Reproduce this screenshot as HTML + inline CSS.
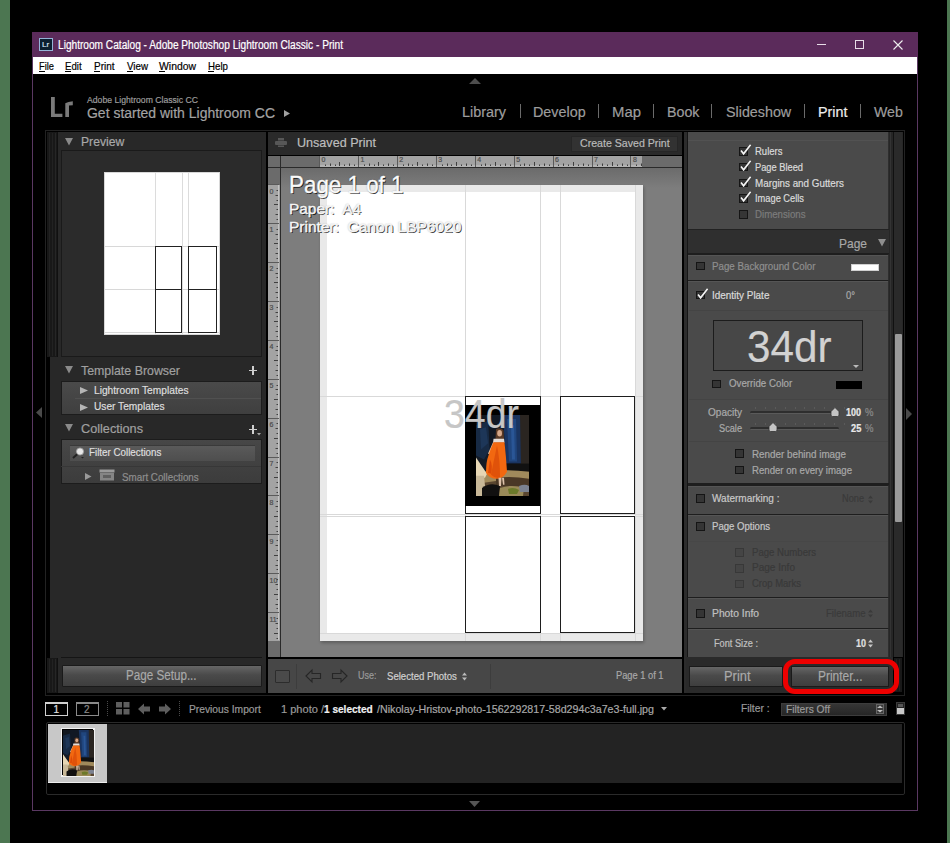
<!DOCTYPE html>
<html><head><meta charset="utf-8">
<style>
*{margin:0;padding:0;box-sizing:border-box}
html,body{width:950px;height:843px;overflow:hidden;background:#000;font-family:"Liberation Sans",sans-serif;position:relative}
.a{position:absolute}
.t{position:absolute;white-space:nowrap;line-height:1;-webkit-text-stroke:0.2px currentColor}
svg{position:absolute;overflow:visible}
</style></head><body>
<div class="a" style="left:0px;top:0px;width:10px;height:843px;background:#4c7651"></div>
<div class="a" style="left:947px;top:0px;width:3px;height:843px;background:#4c7651"></div>
<div class="a" style="left:32px;top:32px;width:886px;height:779px;background:#000;border:1px solid #5a3862;border-top:none"></div>
<div class="a" style="left:32px;top:32px;width:886px;height:25px;background:#5b2b5b"></div>
<div class="a" style="left:39px;top:38px;width:14px;height:13px;background:#0c1f30;border:1px solid #94b4d8"></div>
<div class="t" id="t1" style="left:42px;top:41.00px;font-size:8px;color:#cfe0f0;font-weight:normal;">Lr</div>
<div class="t" id="t2" style="transform:scaleX(0.8444);transform-origin:0 0;left:57.6px;top:39.00px;font-size:12px;color:#ffffff;font-weight:normal;">Lightroom Catalog - Adobe Photoshop Lightroom Classic - Print</div>
<div class="a" style="left:817px;top:44px;width:9px;height:1px;background:#e8dde8"></div>
<div class="a" style="left:855px;top:40px;width:9px;height:9px;border:1px solid #e8dde8"></div>
<svg style="left:893px;top:40px" width="10" height="10"><path d="M0.5 0.5L9.5 9.5M9.5 0.5L0.5 9.5" stroke="#eee" stroke-width="1.1"/></svg>
<div class="a" style="left:33px;top:57px;width:884px;height:17px;background:#fff"></div>
<div class="t" id="t3" style="transform:scaleX(0.8458);transform-origin:0 0;left:38.8px;top:61.00px;font-size:11px;color:#000;font-weight:normal;">File</div>
<div class="a" style="left:39px;top:71px;width:6px;height:1px;background:#000"></div>
<div class="t" id="t4" style="transform:scaleX(0.8751);transform-origin:0 0;left:65.4px;top:61.00px;font-size:11px;color:#000;font-weight:normal;">Edit</div>
<div class="a" style="left:65px;top:71px;width:6px;height:1px;background:#000"></div>
<div class="t" id="t5" style="transform:scaleX(0.9061);transform-origin:0 0;left:94.2px;top:61.00px;font-size:11px;color:#000;font-weight:normal;">Print</div>
<div class="a" style="left:94px;top:71px;width:6px;height:1px;background:#000"></div>
<div class="t" id="t6" style="transform:scaleX(0.8877);transform-origin:0 0;left:126.7px;top:61.00px;font-size:11px;color:#000;font-weight:normal;">View</div>
<div class="a" style="left:127px;top:71px;width:6px;height:1px;background:#000"></div>
<div class="t" id="t7" style="transform:scaleX(0.9457);transform-origin:0 0;left:159.4px;top:61.00px;font-size:11px;color:#000;font-weight:normal;">Window</div>
<div class="a" style="left:159px;top:71px;width:6px;height:1px;background:#000"></div>
<div class="t" id="t8" style="transform:scaleX(0.8840);transform-origin:0 0;left:208px;top:61.00px;font-size:11px;color:#000;font-weight:normal;">Help</div>
<div class="a" style="left:208px;top:71px;width:6px;height:1px;background:#000"></div>
<svg style="left:469px;top:78px" width="12" height="6"><path d="M0 6L6 0L12 6Z" fill="#4d4d4d"/></svg>
<svg style="left:50px;top:96px" width="25" height="22"><path d="M1 1H4.8V17.8H12.4V21H1Z" fill="#7a7a7a"/><path d="M15.3 7.2Q18 5.6 22.8 5.2V9.2Q20.5 9.2 19 9.6V21H15.3Z" fill="#7a7a7a"/></svg>
<div class="t" id="t9" style="transform:scaleX(0.9409);transform-origin:0 0;left:87px;top:96.00px;font-size:9.2px;color:#9c9c9c;font-weight:normal;">Adobe Lightroom Classic CC</div>
<div class="t" id="t10" style="transform:scaleX(0.9017);transform-origin:0 0;left:87px;top:105.00px;font-size:15.5px;color:#a3a3a3;font-weight:normal;">Get started with Lightroom CC</div>
<svg style="left:284px;top:110px" width="6" height="7"><path d="M0 0L6 3.5L0 7Z" fill="#a0a0a0"/></svg>
<div class="t" id="t11" style="transform:scaleX(0.9352);transform-origin:0 0;left:461.8px;top:104.00px;font-size:15.4px;color:#9d9d9d;font-weight:normal;">Library</div>
<div class="t" id="t12" style="transform:scaleX(0.9315);transform-origin:0 0;left:532.9px;top:104.00px;font-size:15.4px;color:#9d9d9d;font-weight:normal;">Develop</div>
<div class="t" id="t13" style="transform:scaleX(0.9682);transform-origin:0 0;left:611.8px;top:104.00px;font-size:15.4px;color:#9d9d9d;font-weight:normal;">Map</div>
<div class="t" id="t14" style="transform:scaleX(0.9261);transform-origin:0 0;left:667px;top:104.00px;font-size:15.4px;color:#9d9d9d;font-weight:normal;">Book</div>
<div class="t" id="t15" style="transform:scaleX(0.9294);transform-origin:0 0;left:725.8px;top:104.00px;font-size:15.4px;color:#9d9d9d;font-weight:normal;">Slideshow</div>
<div class="t" id="t16" style="transform:scaleX(0.9319);transform-origin:0 0;left:817.9px;top:104.00px;font-size:15.4px;color:#ececec;font-weight:normal;">Print</div>
<div class="t" id="t17" style="transform:scaleX(0.9211);transform-origin:0 0;left:873.7px;top:104.00px;font-size:15.4px;color:#9d9d9d;font-weight:normal;">Web</div>
<div class="a" style="left:520px;top:104px;width:1px;height:14px;background:#6a6a6a"></div>
<div class="a" style="left:598px;top:104px;width:1px;height:14px;background:#6a6a6a"></div>
<div class="a" style="left:653px;top:104px;width:1px;height:14px;background:#6a6a6a"></div>
<div class="a" style="left:711px;top:104px;width:1px;height:14px;background:#6a6a6a"></div>
<div class="a" style="left:804px;top:104px;width:1px;height:14px;background:#6a6a6a"></div>
<div class="a" style="left:860px;top:104px;width:1px;height:14px;background:#6a6a6a"></div>
<div class="a" style="left:45px;top:130px;width:860px;height:566px;background:#000;border:1px solid #222"></div>
<div class="a" style="left:49.5px;top:132px;width:216.5px;height:561px;background:#282828"></div>
<div class="a" style="left:47px;top:132px;width:10px;height:225px;background:#181818"></div>
<div class="a" style="left:49px;top:133px;width:1px;height:223px;background:#222"></div>
<div class="a" style="left:52px;top:133px;width:1px;height:223px;background:#222"></div>
<div class="a" style="left:55px;top:133px;width:1px;height:223px;background:#262626"></div>
<div class="a" style="left:57px;top:132px;width:1px;height:225px;background:#101010"></div>
<div class="a" style="left:47px;top:658px;width:10px;height:35px;background:#181818"></div>
<div class="a" style="left:49px;top:659px;width:1px;height:33px;background:#222"></div>
<div class="a" style="left:52px;top:659px;width:1px;height:33px;background:#222"></div>
<div class="a" style="left:55px;top:659px;width:1px;height:33px;background:#262626"></div>
<div class="a" style="left:57px;top:658px;width:1px;height:35px;background:#101010"></div>
<svg style="left:64.5px;top:137.6px" width="8" height="8"><path d="M0 0H8L4 7.6Z" fill="#8a8a8a"/></svg>
<div class="t" id="t18" style="transform:scaleX(0.9231);transform-origin:0 0;left:80.7px;top:135.00px;font-size:13.2px;color:#a8a8a8;font-weight:normal;">Preview</div>
<div class="a" style="left:61px;top:150px;width:201px;height:207px;background:#2b2b2b;border:1px solid #1a1a1a"></div>
<div class="a" style="left:104px;top:172px;width:116px;height:163px;background:#fff;border:1px solid #d8d8d8"></div>
<div class="a" style="left:155px;top:173px;width:1px;height:161px;background:#dcdcdc"></div>
<div class="a" style="left:182px;top:173px;width:1px;height:161px;background:#dcdcdc"></div>
<div class="a" style="left:188px;top:173px;width:1px;height:161px;background:#dcdcdc"></div>
<div class="a" style="left:105px;top:246px;width:114px;height:1px;background:#d8d8d8"></div>
<div class="a" style="left:105px;top:289px;width:114px;height:1px;background:#d8d8d8"></div>
<div class="a" style="left:105px;top:332px;width:114px;height:1px;background:#d8d8d8"></div>
<div class="a" style="left:155px;top:246px;width:27px;height:44px;border:1px solid #222"></div>
<div class="a" style="left:155px;top:289px;width:27px;height:44px;border:1px solid #222"></div>
<div class="a" style="left:188px;top:246px;width:29px;height:44px;border:1px solid #222"></div>
<div class="a" style="left:188px;top:289px;width:29px;height:44px;border:1px solid #222"></div>
<svg style="left:64.5px;top:366px" width="8" height="8"><path d="M0 0H8L4 7.6Z" fill="#8a8a8a"/></svg>
<div class="t" id="t19" style="transform:scaleX(0.9380);transform-origin:0 0;left:81px;top:364.00px;font-size:13.2px;color:#a0a0a0;font-weight:normal;">Template Browser</div>
<div class="a" style="left:248.5px;top:369.5px;width:8.5px;height:1.6px;background:#cfcfcf"></div>
<div class="a" style="left:252px;top:366px;width:1.6px;height:8.5px;background:#cfcfcf"></div>
<div class="a" style="left:60.5px;top:380.5px;width:201px;height:34px;background:linear-gradient(#4a4a4a,#3f3f3f);border:1px solid #1c1c1c"></div>
<div class="a" style="left:75px;top:398px;width:186px;height:1px;background:#505050"></div>
<svg style="left:80px;top:386.5px" width="8" height="7"><path d="M0 0L8 3.5L0 7Z" fill="#b5b5b5"/></svg>
<svg style="left:80px;top:403.5px" width="8" height="7"><path d="M0 0L8 3.5L0 7Z" fill="#b5b5b5"/></svg>
<div class="t" id="t20" style="transform:scaleX(1.0199);transform-origin:0 0;left:94px;top:386.00px;font-size:10px;color:#dddddd;font-weight:normal;">Lightroom Templates</div>
<div class="t" id="t21" style="transform:scaleX(1.0174);transform-origin:0 0;left:94px;top:402.00px;font-size:10px;color:#dddddd;font-weight:normal;">User Templates</div>
<svg style="left:64.5px;top:424px" width="8" height="8"><path d="M0 0H8L4 7.6Z" fill="#8a8a8a"/></svg>
<div class="t" id="t22" style="transform:scaleX(0.9610);transform-origin:0 0;left:81px;top:422.00px;font-size:13.2px;color:#a0a0a0;font-weight:normal;">Collections</div>
<div class="a" style="left:248.5px;top:428.5px;width:8.5px;height:1.6px;background:#cfcfcf"></div>
<div class="a" style="left:252px;top:425px;width:1.6px;height:8.5px;background:#cfcfcf"></div>
<svg style="left:257px;top:433px" width="4" height="3"><path d="M0 0H4L2 2.5Z" fill="#aaa"/></svg>
<div class="a" style="left:60.5px;top:439px;width:201px;height:45px;background:linear-gradient(#474747,#3c3c3c);border:1px solid #1c1c1c"></div>
<div class="a" style="left:69.5px;top:444.5px;width:185px;height:16.5px;background:linear-gradient(#5a5a5a,#4e4e4e);border-top:1px solid #3a3a3a"></div>
<svg style="left:72px;top:447px" width="14" height="12"><circle cx="8" cy="4.5" r="3.6" fill="#e8e8e8" stroke="#999" stroke-width="0.8"/><path d="M5.2 7.2L1 11" stroke="#222" stroke-width="2"/><path d="M9 10H12L10.5 11.5Z" fill="#222"/></svg>
<div class="t" id="t23" style="transform:scaleX(0.9794);transform-origin:0 0;left:89px;top:448.00px;font-size:10px;color:#dedede;font-weight:normal;">Filter Collections</div>
<div class="a" style="left:61px;top:466px;width:200px;height:1px;background:#373737"></div>
<svg style="left:85px;top:473px" width="7" height="7"><path d="M0 0L6.5 3.5L0 7Z" fill="#9a9a9a"/></svg>
<svg style="left:99px;top:469px" width="16" height="12"><rect x="0.5" y="0.5" width="15" height="3" fill="#9a9a9a"/><rect x="1" y="4" width="14" height="7.5" fill="#858585"/><rect x="4" y="6" width="8" height="3" fill="#606060"/></svg>
<div class="t" id="t24" style="transform:scaleX(0.9788);transform-origin:0 0;left:122.4px;top:473.00px;font-size:10px;color:#8e8e8e;font-weight:normal;">Smart Collections</div>
<div class="a" style="left:61px;top:657px;width:201px;height:1px;background:#151515"></div>
<div class="a" style="left:61.5px;top:665px;width:200px;height:22px;background:linear-gradient(#666,#4a4a4a 45%,#3e3e3e);border:1px solid #1a1a1a;border-radius:1px"></div>
<div class="t" id="t25" style="transform:scaleX(0.8321);transform-origin:0 0;left:126.4px;top:668.00px;font-size:14px;color:#a9a9a9;font-weight:normal;">Page Setup...</div>
<svg style="left:36px;top:407px" width="6" height="11"><path d="M6 0L0 5.5L6 11Z" fill="#4a4a4a"/></svg>
<div class="a" style="left:268px;top:131.5px;width:414px;height:23.5px;background:#2a2a2a"></div>
<svg style="left:275px;top:138px" width="12" height="9"><rect x="3" y="0" width="6" height="2.5" fill="#575757"/><rect x="0" y="3" width="12" height="4" rx="1" fill="#575757"/><rect x="3" y="7.5" width="6" height="1.5" fill="#575757"/></svg>
<div class="t" id="t26" style="transform:scaleX(0.9986);transform-origin:0 0;left:296.7px;top:137.00px;font-size:12.6px;color:#bdbdbd;font-weight:normal;">Unsaved Print</div>
<div class="a" style="left:571px;top:135.5px;width:107px;height:16px;background:#323232;border:1px solid #262626"></div>
<div class="t" id="t27" style="transform:scaleX(0.9641);transform-origin:0 0;left:579.8px;top:138.00px;font-size:11px;color:#b9b9b9;font-weight:normal;">Create Saved Print</div>
<div class="a" style="left:268px;top:155.5px;width:414px;height:11.5px;background:#6b6b6b"></div>
<div class="a" style="left:268px;top:155.5px;width:11.5px;height:502px;background:#6b6b6b"></div>
<div class="a" style="left:279.5px;top:155.5px;width:1.5px;height:502px;background:#2a2a2a"></div>
<div class="a" style="left:268px;top:167px;width:414px;height:1px;background:#2a2a2a"></div>
<div class="a" style="left:320px;top:155.5px;width:322px;height:11.5px;background:#a3a3a3"></div>
<div class="a" style="left:268px;top:185px;width:11.5px;height:455.5px;background:#a3a3a3"></div>
<svg style="left:0px;top:0px" width="950" height="843"><rect x="320" y="165.5" width="322" height="1" fill="#c4c4c4"/><rect x="278" y="185" width="1" height="455" fill="#c4c4c4"/><rect x="319" y="156" width="1" height="11" fill="#5a5a5a"/><rect x="325" y="164.5" width="1" height="1.5" fill="#404040"/><rect x="330" y="163.5" width="1" height="2.5" fill="#404040"/><rect x="335" y="164.5" width="1" height="1.5" fill="#404040"/><rect x="339" y="162" width="1" height="4" fill="#404040"/><rect x="344" y="164.5" width="1" height="1.5" fill="#404040"/><rect x="349" y="163.5" width="1" height="2.5" fill="#404040"/><rect x="354" y="164.5" width="1" height="1.5" fill="#404040"/><rect x="358" y="156" width="1" height="11" fill="#5a5a5a"/><rect x="364" y="164.5" width="1" height="1.5" fill="#404040"/><rect x="369" y="163.5" width="1" height="2.5" fill="#404040"/><rect x="374" y="164.5" width="1" height="1.5" fill="#404040"/><rect x="378" y="162" width="1" height="4" fill="#404040"/><rect x="383" y="164.5" width="1" height="1.5" fill="#404040"/><rect x="388" y="163.5" width="1" height="2.5" fill="#404040"/><rect x="393" y="164.5" width="1" height="1.5" fill="#404040"/><rect x="397" y="156" width="1" height="11" fill="#5a5a5a"/><rect x="403" y="164.5" width="1" height="1.5" fill="#404040"/><rect x="408" y="163.5" width="1" height="2.5" fill="#404040"/><rect x="412" y="164.5" width="1" height="1.5" fill="#404040"/><rect x="417" y="162" width="1" height="4" fill="#404040"/><rect x="422" y="164.5" width="1" height="1.5" fill="#404040"/><rect x="427" y="163.5" width="1" height="2.5" fill="#404040"/><rect x="432" y="164.5" width="1" height="1.5" fill="#404040"/><rect x="436" y="156" width="1" height="11" fill="#5a5a5a"/><rect x="442" y="164.5" width="1" height="1.5" fill="#404040"/><rect x="447" y="163.5" width="1" height="2.5" fill="#404040"/><rect x="451" y="164.5" width="1" height="1.5" fill="#404040"/><rect x="456" y="162" width="1" height="4" fill="#404040"/><rect x="461" y="164.5" width="1" height="1.5" fill="#404040"/><rect x="466" y="163.5" width="1" height="2.5" fill="#404040"/><rect x="471" y="164.5" width="1" height="1.5" fill="#404040"/><rect x="475" y="156" width="1" height="11" fill="#5a5a5a"/><rect x="481" y="164.5" width="1" height="1.5" fill="#404040"/><rect x="485" y="163.5" width="1" height="2.5" fill="#404040"/><rect x="490" y="164.5" width="1" height="1.5" fill="#404040"/><rect x="495" y="162" width="1" height="4" fill="#404040"/><rect x="500" y="164.5" width="1" height="1.5" fill="#404040"/><rect x="505" y="163.5" width="1" height="2.5" fill="#404040"/><rect x="510" y="164.5" width="1" height="1.5" fill="#404040"/><rect x="514" y="156" width="1" height="11" fill="#5a5a5a"/><rect x="520" y="164.5" width="1" height="1.5" fill="#404040"/><rect x="524" y="163.5" width="1" height="2.5" fill="#404040"/><rect x="529" y="164.5" width="1" height="1.5" fill="#404040"/><rect x="534" y="162" width="1" height="4" fill="#404040"/><rect x="539" y="164.5" width="1" height="1.5" fill="#404040"/><rect x="544" y="163.5" width="1" height="2.5" fill="#404040"/><rect x="549" y="164.5" width="1" height="1.5" fill="#404040"/><rect x="553" y="156" width="1" height="11" fill="#5a5a5a"/><rect x="558" y="164.5" width="1" height="1.5" fill="#404040"/><rect x="563" y="163.5" width="1" height="2.5" fill="#404040"/><rect x="568" y="164.5" width="1" height="1.5" fill="#404040"/><rect x="573" y="162" width="1" height="4" fill="#404040"/><rect x="578" y="164.5" width="1" height="1.5" fill="#404040"/><rect x="583" y="163.5" width="1" height="2.5" fill="#404040"/><rect x="588" y="164.5" width="1" height="1.5" fill="#404040"/><rect x="592" y="156" width="1" height="11" fill="#5a5a5a"/><rect x="597" y="164.5" width="1" height="1.5" fill="#404040"/><rect x="602" y="163.5" width="1" height="2.5" fill="#404040"/><rect x="607" y="164.5" width="1" height="1.5" fill="#404040"/><rect x="612" y="162" width="1" height="4" fill="#404040"/><rect x="617" y="164.5" width="1" height="1.5" fill="#404040"/><rect x="622" y="163.5" width="1" height="2.5" fill="#404040"/><rect x="627" y="164.5" width="1" height="1.5" fill="#404040"/><rect x="630" y="156" width="1" height="11" fill="#5a5a5a"/><rect x="636" y="164.5" width="1" height="1.5" fill="#404040"/><rect x="641" y="163.5" width="1" height="2.5" fill="#404040"/><rect x="268" y="184" width="11" height="1" fill="#5a5a5a"/><rect x="276.5" y="190" width="1.5" height="1" fill="#404040"/><rect x="275.5" y="195" width="2.5" height="1" fill="#404040"/><rect x="276.5" y="200" width="1.5" height="1" fill="#404040"/><rect x="274" y="204" width="4" height="1" fill="#404040"/><rect x="276.5" y="209" width="1.5" height="1" fill="#404040"/><rect x="275.5" y="214" width="2.5" height="1" fill="#404040"/><rect x="276.5" y="219" width="1.5" height="1" fill="#404040"/><rect x="268" y="223" width="11" height="1" fill="#5a5a5a"/><rect x="276.5" y="229" width="1.5" height="1" fill="#404040"/><rect x="275.5" y="234" width="2.5" height="1" fill="#404040"/><rect x="276.5" y="239" width="1.5" height="1" fill="#404040"/><rect x="274" y="243" width="4" height="1" fill="#404040"/><rect x="276.5" y="248" width="1.5" height="1" fill="#404040"/><rect x="275.5" y="253" width="2.5" height="1" fill="#404040"/><rect x="276.5" y="258" width="1.5" height="1" fill="#404040"/><rect x="268" y="262" width="11" height="1" fill="#5a5a5a"/><rect x="276.5" y="268" width="1.5" height="1" fill="#404040"/><rect x="275.5" y="273" width="2.5" height="1" fill="#404040"/><rect x="276.5" y="277" width="1.5" height="1" fill="#404040"/><rect x="274" y="282" width="4" height="1" fill="#404040"/><rect x="276.5" y="287" width="1.5" height="1" fill="#404040"/><rect x="275.5" y="292" width="2.5" height="1" fill="#404040"/><rect x="276.5" y="297" width="1.5" height="1" fill="#404040"/><rect x="268" y="301" width="11" height="1" fill="#5a5a5a"/><rect x="276.5" y="307" width="1.5" height="1" fill="#404040"/><rect x="275.5" y="312" width="2.5" height="1" fill="#404040"/><rect x="276.5" y="316" width="1.5" height="1" fill="#404040"/><rect x="274" y="321" width="4" height="1" fill="#404040"/><rect x="276.5" y="326" width="1.5" height="1" fill="#404040"/><rect x="275.5" y="331" width="2.5" height="1" fill="#404040"/><rect x="276.5" y="336" width="1.5" height="1" fill="#404040"/><rect x="268" y="340" width="11" height="1" fill="#5a5a5a"/><rect x="276.5" y="346" width="1.5" height="1" fill="#404040"/><rect x="275.5" y="350" width="2.5" height="1" fill="#404040"/><rect x="276.5" y="355" width="1.5" height="1" fill="#404040"/><rect x="274" y="360" width="4" height="1" fill="#404040"/><rect x="276.5" y="365" width="1.5" height="1" fill="#404040"/><rect x="275.5" y="370" width="2.5" height="1" fill="#404040"/><rect x="276.5" y="375" width="1.5" height="1" fill="#404040"/><rect x="268" y="379" width="11" height="1" fill="#5a5a5a"/><rect x="276.5" y="385" width="1.5" height="1" fill="#404040"/><rect x="275.5" y="389" width="2.5" height="1" fill="#404040"/><rect x="276.5" y="394" width="1.5" height="1" fill="#404040"/><rect x="274" y="399" width="4" height="1" fill="#404040"/><rect x="276.5" y="404" width="1.5" height="1" fill="#404040"/><rect x="275.5" y="409" width="2.5" height="1" fill="#404040"/><rect x="276.5" y="414" width="1.5" height="1" fill="#404040"/><rect x="268" y="418" width="11" height="1" fill="#5a5a5a"/><rect x="276.5" y="423" width="1.5" height="1" fill="#404040"/><rect x="275.5" y="428" width="2.5" height="1" fill="#404040"/><rect x="276.5" y="433" width="1.5" height="1" fill="#404040"/><rect x="274" y="438" width="4" height="1" fill="#404040"/><rect x="276.5" y="443" width="1.5" height="1" fill="#404040"/><rect x="275.5" y="448" width="2.5" height="1" fill="#404040"/><rect x="276.5" y="453" width="1.5" height="1" fill="#404040"/><rect x="268" y="457" width="11" height="1" fill="#5a5a5a"/><rect x="276.5" y="462" width="1.5" height="1" fill="#404040"/><rect x="275.5" y="467" width="2.5" height="1" fill="#404040"/><rect x="276.5" y="472" width="1.5" height="1" fill="#404040"/><rect x="274" y="477" width="4" height="1" fill="#404040"/><rect x="276.5" y="482" width="1.5" height="1" fill="#404040"/><rect x="275.5" y="487" width="2.5" height="1" fill="#404040"/><rect x="276.5" y="492" width="1.5" height="1" fill="#404040"/><rect x="268" y="495" width="11" height="1" fill="#5a5a5a"/><rect x="276.5" y="501" width="1.5" height="1" fill="#404040"/><rect x="275.5" y="506" width="2.5" height="1" fill="#404040"/><rect x="276.5" y="511" width="1.5" height="1" fill="#404040"/><rect x="274" y="516" width="4" height="1" fill="#404040"/><rect x="276.5" y="521" width="1.5" height="1" fill="#404040"/><rect x="275.5" y="526" width="2.5" height="1" fill="#404040"/><rect x="276.5" y="531" width="1.5" height="1" fill="#404040"/><rect x="268" y="534" width="11" height="1" fill="#5a5a5a"/><rect x="276.5" y="540" width="1.5" height="1" fill="#404040"/><rect x="275.5" y="545" width="2.5" height="1" fill="#404040"/><rect x="276.5" y="550" width="1.5" height="1" fill="#404040"/><rect x="274" y="555" width="4" height="1" fill="#404040"/><rect x="276.5" y="560" width="1.5" height="1" fill="#404040"/><rect x="275.5" y="565" width="2.5" height="1" fill="#404040"/><rect x="276.5" y="569" width="1.5" height="1" fill="#404040"/><rect x="268" y="573" width="11" height="1" fill="#5a5a5a"/><rect x="276.5" y="579" width="1.5" height="1" fill="#404040"/><rect x="275.5" y="584" width="2.5" height="1" fill="#404040"/><rect x="276.5" y="589" width="1.5" height="1" fill="#404040"/><rect x="274" y="594" width="4" height="1" fill="#404040"/><rect x="276.5" y="599" width="1.5" height="1" fill="#404040"/><rect x="275.5" y="604" width="2.5" height="1" fill="#404040"/><rect x="276.5" y="608" width="1.5" height="1" fill="#404040"/><rect x="268" y="612" width="11" height="1" fill="#5a5a5a"/><rect x="276.5" y="618" width="1.5" height="1" fill="#404040"/><rect x="275.5" y="623" width="2.5" height="1" fill="#404040"/><rect x="276.5" y="628" width="1.5" height="1" fill="#404040"/><rect x="274" y="633" width="4" height="1" fill="#404040"/><rect x="276.5" y="638" width="1.5" height="1" fill="#404040"/></svg>
<div class="t" id="t28" style="left:321.5px;top:156.00px;font-size:7px;color:#4c4c4c;font-weight:normal;">0</div>
<div class="t" id="t29" style="left:360.43591293833134px;top:156.00px;font-size:7px;color:#4c4c4c;font-weight:normal;">1</div>
<div class="t" id="t30" style="left:399.3718258766626px;top:156.00px;font-size:7px;color:#4c4c4c;font-weight:normal;">2</div>
<div class="t" id="t31" style="left:438.30773881499397px;top:156.00px;font-size:7px;color:#4c4c4c;font-weight:normal;">3</div>
<div class="t" id="t32" style="left:477.24365175332525px;top:156.00px;font-size:7px;color:#4c4c4c;font-weight:normal;">4</div>
<div class="t" id="t33" style="left:516.1795646916567px;top:156.00px;font-size:7px;color:#4c4c4c;font-weight:normal;">5</div>
<div class="t" id="t34" style="left:555.1154776299879px;top:156.00px;font-size:7px;color:#4c4c4c;font-weight:normal;">6</div>
<div class="t" id="t35" style="left:594.0513905683192px;top:156.00px;font-size:7px;color:#4c4c4c;font-weight:normal;">7</div>
<div class="t" id="t36" style="left:632.9873035066505px;top:156.00px;font-size:7px;color:#4c4c4c;font-weight:normal;">8</div>
<div class="t" id="t37" style="left:269.5px;top:188.00px;font-size:7px;color:#4c4c4c;font-weight:normal;">0</div>
<div class="t" id="t38" style="left:269.5px;top:226.00px;font-size:7px;color:#4c4c4c;font-weight:normal;">1</div>
<div class="t" id="t39" style="left:269.5px;top:265.00px;font-size:7px;color:#4c4c4c;font-weight:normal;">2</div>
<div class="t" id="t40" style="left:269.5px;top:304.00px;font-size:7px;color:#4c4c4c;font-weight:normal;">3</div>
<div class="t" id="t41" style="left:269.5px;top:343.00px;font-size:7px;color:#4c4c4c;font-weight:normal;">4</div>
<div class="t" id="t42" style="left:269.5px;top:382.00px;font-size:7px;color:#4c4c4c;font-weight:normal;">5</div>
<div class="t" id="t43" style="left:269.5px;top:421.00px;font-size:7px;color:#4c4c4c;font-weight:normal;">6</div>
<div class="t" id="t44" style="left:269.5px;top:460.00px;font-size:7px;color:#4c4c4c;font-weight:normal;">7</div>
<div class="t" id="t45" style="left:269.5px;top:499.00px;font-size:7px;color:#4c4c4c;font-weight:normal;">8</div>
<div class="t" id="t46" style="left:269.5px;top:538.00px;font-size:7px;color:#4c4c4c;font-weight:normal;">9</div>
<div class="t" id="t47" style="left:269.5px;top:577.00px;font-size:7px;color:#4c4c4c;font-weight:normal;">10</div>
<div class="t" id="t48" style="left:269.5px;top:616.00px;font-size:7px;color:#4c4c4c;font-weight:normal;">11</div>
<div class="a" style="left:281px;top:168px;width:401px;height:489px;background:#7d7d7d"></div>
<div class="a" style="left:281px;top:168px;width:401px;height:20px;background:linear-gradient(#6b6b6b,rgba(125,125,125,0))"></div>
<div class="a" style="left:320px;top:185px;width:323px;height:456px;background:#e9e9e9;box-shadow:1px 2px 3px rgba(0,0,0,0.25)"></div>
<div class="a" style="left:327px;top:192px;width:309px;height:441px;background:#fff"></div>
<div class="a" style="left:464.5px;top:185px;width:1px;height:456px;background:#d9d9d9"></div>
<div class="a" style="left:540px;top:185px;width:1px;height:456px;background:#d9d9d9"></div>
<div class="a" style="left:560px;top:185px;width:1px;height:456px;background:#d9d9d9"></div>
<div class="a" style="left:635px;top:185px;width:1px;height:456px;background:#d9d9d9"></div>
<div class="a" style="left:320px;top:396px;width:323px;height:1px;background:#d9d9d9"></div>
<div class="a" style="left:320px;top:513.5px;width:323px;height:1px;background:#d9d9d9"></div>
<div class="a" style="left:320px;top:516px;width:323px;height:1px;background:#d9d9d9"></div>
<div class="a" style="left:320px;top:632.5px;width:323px;height:1px;background:#d9d9d9"></div>
<div class="a" style="left:464.5px;top:396px;width:76px;height:117.5px;border:1px solid #1e1e1e;background:#fff"></div>
<div class="a" style="left:560px;top:396px;width:75px;height:117.5px;border:1px solid #1e1e1e;background:#fff"></div>
<div class="a" style="left:464.5px;top:516px;width:76px;height:117px;border:1px solid #1e1e1e;background:#fff"></div>
<div class="a" style="left:560px;top:516px;width:75px;height:117px;border:1px solid #1e1e1e;background:#fff"></div>
<div class="a" style="left:465px;top:404.5px;width:75px;height:101.5px;background:#000"></div>
<div class="a" style="left:476px;top:414.5px;width:53px;height:81px"><svg viewBox="0 0 53 80" width="53" height="81" preserveAspectRatio="none" style="position:static;display:block">
<rect width="53" height="80" fill="#141b26"/>
<path d="M0 0H53V8H0Z" fill="#121820"/>
<path d="M0 10L12 6L16 30L8 44L0 40Z" fill="#172a44"/>
<path d="M4 14L10 12L12 28L5 34Z" fill="#1d3658"/>
<path d="M12 0H28V44H14Z" fill="#111824"/>
<path d="M27 0H45L46 48H30Z" fill="#1a3460"/>
<path d="M31 4H40L41 46H33Z" fill="#20467e"/>
<path d="M35 10H38L39 44H36Z" fill="#2a5696"/>
<path d="M44 0H53V56H45Z" fill="#2a2521"/>
<path d="M29 48H53V57H29Z" fill="#111111"/>
<path d="M0 56H53V80H0Z" fill="#5a4630"/>
<path d="M8 56Q28 53 53 56V66Q34 62 8 67Z" fill="#a08a5c"/>
<path d="M20 62Q36 60 53 63V70H20Z" fill="#4a3826"/>
<path d="M0 42L11 58L9 62L0 62Z" fill="#e6d6b4"/>
<path d="M0 60H8L10 80H0Z" fill="#c8b898"/>
<path d="M6 72Q14 66 24 70L23 80H6Z" fill="#111010"/>
<path d="M24 72Q36 68 48 72L47 80H23Z" fill="#9a8a58"/>
<path d="M32 73Q38 71 43 74L41 78H33Z" fill="#6c7a2a"/>
<path d="M43 70Q49 68 53 70V76H44Z" fill="#7c8290"/>
<path d="M20 14Q24 12 27.5 15L28 24H19.5Z" fill="#5a3a26"/>
<ellipse cx="23.6" cy="18" rx="2.4" ry="3.2" fill="#d6a88a"/>
<path d="M17.5 23.5H28L28.5 27.5H17Z" fill="#e4dcd6"/>
<path d="M17.5 26L12 38L13.5 39L18.5 30Z" fill="#e8c0a0"/>
<path d="M17.5 27H28.5Q30 40 31 56Q27 63 21 63Q13 63 10 57Q10 46 12.5 40Q15 32 17.5 27Z" fill="#f26810"/>
<path d="M21 30Q24 44 24 62Q19 63 15 59Q18 44 21 30Z" fill="#e0520a"/>
<path d="M14 44Q17 50 15 58L12 57Z" fill="#dd4a08"/>
<path d="M22.5 62L23 70H25L25.5 62ZM26 62L27 69H28.5L28 62Z" fill="#dcc0a8"/>
</svg></div>
<div class="t" id="t49" style="transform:scaleX(0.9368);transform-origin:0 0;left:443.9px;top:394.00px;font-size:40px;color:#c6c6c6;font-weight:normal;">34dr</div>
<div class="t" id="t50" style="transform:scaleX(0.9136);transform-origin:0 0;left:289.3px;top:173.00px;font-size:24.5px;color:#fafafa;font-weight:normal;text-shadow:1px 1px 0.6px rgba(0,0,0,0.75),0 0 1.5px rgba(0,0,0,0.35);-webkit-text-stroke:0.4px #fafafa">Page 1 of 1</div>
<div class="t" id="t51" style="transform:scaleX(1.0632);transform-origin:0 0;left:289px;top:202.00px;font-size:14.5px;color:#f5f5f5;font-weight:normal;text-shadow:1px 1px 0.6px rgba(0,0,0,0.75),0 0 1.5px rgba(0,0,0,0.35);-webkit-text-stroke:0.45px #f5f5f5">Paper:&nbsp; A4</div>
<div class="t" id="t52" style="transform:scaleX(1.0687);transform-origin:0 0;left:289px;top:220.00px;font-size:14.5px;color:#f5f5f5;font-weight:normal;text-shadow:1px 1px 0.6px rgba(0,0,0,0.75),0 0 1.5px rgba(0,0,0,0.35);-webkit-text-stroke:0.45px #f5f5f5">Printer:&nbsp; Canon LBP6020</div>
<div class="a" style="left:268px;top:657px;width:414px;height:2px;background:#000"></div>
<div class="a" style="left:268px;top:659px;width:414px;height:34px;background:#474747"></div>
<div class="a" style="left:275px;top:669.5px;width:15px;height:13.5px;border:1px solid #2c2c2c;background:#4a4a4a;border-radius:1px"></div>
<div class="a" style="left:296px;top:664px;width:1px;height:25px;background:#3d3d3d"></div>
<svg style="left:305px;top:669px" width="17" height="14"><path d="M1 7L7 1V4.5H15.5V9.5H7V13Z" fill="none" stroke="#262626" stroke-width="1.1"/></svg>
<svg style="left:331px;top:669px" width="17" height="14"><path d="M16 7L10 1V4.5H1.5V9.5H10V13Z" fill="none" stroke="#262626" stroke-width="1.1"/></svg>
<div class="t" id="t53" style="transform:scaleX(0.8997);transform-origin:0 0;left:358px;top:671.00px;font-size:10px;color:#9a9a9a;font-weight:normal;">Use:</div>
<div class="t" id="t54" style="transform:scaleX(0.9598);transform-origin:0 0;left:386.9px;top:672.00px;font-size:10px;color:#d0d0d0;font-weight:normal;">Selected Photos</div>
<svg style="left:462px;top:672px" width="5" height="9"><path d="M0 3.5L2.5 0.5L5 3.5ZM0 5.5L2.5 8.5L5 5.5Z" fill="#bbb"/></svg>
<div class="a" style="left:490px;top:664px;width:1px;height:25px;background:#3d3d3d"></div>
<div class="t" id="t55" style="transform:scaleX(0.9285);transform-origin:0 0;left:616px;top:671.00px;font-size:10px;color:#a8a8a8;font-weight:normal;">Page 1 of 1</div>
<div class="a" style="left:684px;top:132px;width:219px;height:561px;background:#2c2c2c"></div>
<div class="a" style="left:687px;top:132px;width:1px;height:525px;background:#161616"></div>
<div class="a" style="left:889px;top:132px;width:14px;height:525px;background:#262626"></div>
<div class="a" style="left:890px;top:132px;width:1px;height:525px;background:#333"></div>
<div class="a" style="left:893px;top:132px;width:1px;height:525px;background:#111"></div>
<div class="a" style="left:894px;top:132px;width:8px;height:525px;background:#2a2a2a"></div>
<div class="a" style="left:895px;top:334px;width:7px;height:188px;background:#9a9a9a;border-radius:1px"></div>
<div class="a" style="left:688px;top:132px;width:201px;height:98px;background:#4a4a4a;border-bottom:1px solid #262626;border-right:1px solid #2e2e2e"></div>
<div class="a" style="left:688px;top:139.5px;width:200px;height:1px;background:#525252"></div>
<div class="a" style="left:739px;top:147.0px;width:8.5px;height:8.5px;background:#353535;border:1px solid #151515"></div>
<svg style="left:739px;top:143.0px" width="13" height="13"><path d="M2 7.5L4.6 10.8L11.6 1.8" fill="none" stroke="#222" stroke-width="2.6" opacity="0.5"/><path d="M2 7.5L4.6 10.8L11.6 1.8" fill="none" stroke="#f4f4f4" stroke-width="1.7"/></svg>
<div class="t" id="t56" style="transform:scaleX(0.9514);transform-origin:0 0;left:754.8px;top:147.00px;font-size:10px;color:#dadada;font-weight:normal;">Rulers</div>
<div class="a" style="left:739px;top:162.8px;width:8.5px;height:8.5px;background:#353535;border:1px solid #151515"></div>
<svg style="left:739px;top:158.8px" width="13" height="13"><path d="M2 7.5L4.6 10.8L11.6 1.8" fill="none" stroke="#222" stroke-width="2.6" opacity="0.5"/><path d="M2 7.5L4.6 10.8L11.6 1.8" fill="none" stroke="#f4f4f4" stroke-width="1.7"/></svg>
<div class="t" id="t57" style="transform:scaleX(0.9281);transform-origin:0 0;left:754.8px;top:163.00px;font-size:10px;color:#dadada;font-weight:normal;">Page Bleed</div>
<div class="a" style="left:739px;top:178.6px;width:8.5px;height:8.5px;background:#353535;border:1px solid #151515"></div>
<svg style="left:739px;top:174.6px" width="13" height="13"><path d="M2 7.5L4.6 10.8L11.6 1.8" fill="none" stroke="#222" stroke-width="2.6" opacity="0.5"/><path d="M2 7.5L4.6 10.8L11.6 1.8" fill="none" stroke="#f4f4f4" stroke-width="1.7"/></svg>
<div class="t" id="t58" style="transform:scaleX(0.9822);transform-origin:0 0;left:754.8px;top:179.00px;font-size:10px;color:#dadada;font-weight:normal;">Margins and Gutters</div>
<div class="a" style="left:739px;top:194.4px;width:8.5px;height:8.5px;background:#353535;border:1px solid #151515"></div>
<svg style="left:739px;top:190.4px" width="13" height="13"><path d="M2 7.5L4.6 10.8L11.6 1.8" fill="none" stroke="#222" stroke-width="2.6" opacity="0.5"/><path d="M2 7.5L4.6 10.8L11.6 1.8" fill="none" stroke="#f4f4f4" stroke-width="1.7"/></svg>
<div class="t" id="t59" style="transform:scaleX(0.9278);transform-origin:0 0;left:754.8px;top:194.00px;font-size:10px;color:#dadada;font-weight:normal;">Image Cells</div>
<div class="a" style="left:739px;top:210.2px;width:8.5px;height:8.5px;background:#353535;border:1px solid #151515"></div>
<div class="t" id="t60" style="transform:scaleX(0.9665);transform-origin:0 0;left:754.8px;top:210.00px;font-size:10px;color:#7c7c7c;font-weight:normal;">Dimensions</div>
<div class="a" style="left:688px;top:229px;width:201px;height:25px;background:#2f2f2f;border-top:1px solid #222;border-bottom:1px solid #1e1e1e"></div>
<div class="t" id="t61" style="transform:scaleX(0.8880);transform-origin:0 0;left:839px;top:237.00px;font-size:13.5px;color:#a8a8a8;font-weight:normal;">Page</div>
<svg style="left:878px;top:239px" width="8" height="8"><path d="M0 0H8L4 7.4Z" fill="#8f8f8f"/></svg>
<div class="a" style="left:688px;top:253.5px;width:201px;height:27px;background:#4a4a4a;border-top:1px solid #1e1e1e;border-right:1px solid #2e2e2e"></div>
<div class="a" style="left:688px;top:254.5px;width:200px;height:1px;background:#555"></div>
<div class="a" style="left:696px;top:261.7px;width:8.5px;height:8.5px;background:#353535;border:1px solid #151515"></div>
<div class="t" id="t62" style="transform:scaleX(0.9747);transform-origin:0 0;left:712.3px;top:262.00px;font-size:10px;color:#8f8f8f;font-weight:normal;">Page Background Color</div>
<div class="a" style="left:851px;top:263.5px;width:27.5px;height:7.5px;background:#fff;border:1px solid #d0d0d0"></div>
<div class="a" style="left:688px;top:280px;width:201px;height:205px;background:#4a4a4a;border-top:1px solid #1e1e1e;border-right:1px solid #2e2e2e"></div>
<div class="a" style="left:688px;top:281px;width:200px;height:1px;background:#555"></div>
<div class="a" style="left:696px;top:290.6px;width:8.5px;height:8.5px;background:#353535;border:1px solid #151515"></div>
<svg style="left:696px;top:286.6px" width="13" height="13"><path d="M2 7.5L4.6 10.8L11.6 1.8" fill="none" stroke="#222" stroke-width="2.6" opacity="0.5"/><path d="M2 7.5L4.6 10.8L11.6 1.8" fill="none" stroke="#f4f4f4" stroke-width="1.7"/></svg>
<div class="t" id="t63" style="transform:scaleX(0.9929);transform-origin:0 0;left:712.3px;top:291.00px;font-size:10px;color:#dadada;font-weight:normal;">Identity Plate</div>
<div class="t" id="t64" style="transform:scaleX(0.9412);transform-origin:0 0;left:845.6px;top:291.00px;font-size:10px;color:#a8a8a8;font-weight:normal;">0°</div>
<div class="a" style="left:689px;top:310px;width:199px;height:1px;background:#444"></div>
<div class="a" style="left:713px;top:319.5px;width:150px;height:51px;background:#474747;border:1px solid #1c1c1c"></div>
<div class="t" id="t65" style="transform:scaleX(0.9381);transform-origin:0 0;left:746.5px;top:324.00px;font-size:45px;color:#d2d2d2;font-weight:normal;">34dr</div>
<svg style="left:852.5px;top:364.5px" width="6" height="3"><path d="M0 0H6L3 3Z" fill="#bbb"/></svg>
<div class="a" style="left:712.3px;top:379.6px;width:8.5px;height:8.5px;background:#353535;border:1px solid #151515"></div>
<div class="t" id="t66" style="transform:scaleX(0.9718);transform-origin:0 0;left:728.5px;top:379.00px;font-size:10px;color:#a8a8a8;font-weight:normal;">Override Color</div>
<div class="a" style="left:835.7px;top:381.4px;width:26.6px;height:7.5px;background:#000"></div>
<div class="a" style="left:689px;top:398.5px;width:199px;height:1px;background:#444"></div>
<div class="t" id="t67" style="transform:scaleX(1.0028);transform-origin:0 0;left:708.3px;top:408.00px;font-size:10px;color:#aaaaaa;font-weight:normal;">Opacity</div>
<div class="t" id="t68" style="transform:scaleX(0.9194);transform-origin:0 0;left:719.2px;top:424.00px;font-size:10px;color:#aaaaaa;font-weight:normal;">Scale</div>
<div class="a" style="left:749.5px;top:411.3px;width:89px;height:3px;background:#2e2e2e;border-radius:2px;border-bottom:1px solid #5a5a5a"></div>
<div class="a" style="left:755px;top:406.8px;width:1px;height:2px;background:#5a5a5a"></div>
<div class="a" style="left:765px;top:406.8px;width:1px;height:2px;background:#5a5a5a"></div>
<div class="a" style="left:775px;top:406.8px;width:1px;height:2px;background:#5a5a5a"></div>
<div class="a" style="left:785px;top:406.8px;width:1px;height:2px;background:#5a5a5a"></div>
<div class="a" style="left:795px;top:406.8px;width:1px;height:2px;background:#5a5a5a"></div>
<div class="a" style="left:804px;top:406.8px;width:1px;height:2px;background:#5a5a5a"></div>
<div class="a" style="left:814px;top:406.8px;width:1px;height:2px;background:#5a5a5a"></div>
<div class="a" style="left:824px;top:406.8px;width:1px;height:2px;background:#5a5a5a"></div>
<div class="a" style="left:834px;top:406.8px;width:1px;height:2px;background:#5a5a5a"></div>
<div class="a" style="left:844px;top:406.8px;width:1px;height:2px;background:#5a5a5a"></div>
<div class="a" style="left:749.5px;top:427.1px;width:89px;height:3px;background:#2e2e2e;border-radius:2px;border-bottom:1px solid #5a5a5a"></div>
<div class="a" style="left:755px;top:422.6px;width:1px;height:2px;background:#5a5a5a"></div>
<div class="a" style="left:765px;top:422.6px;width:1px;height:2px;background:#5a5a5a"></div>
<div class="a" style="left:775px;top:422.6px;width:1px;height:2px;background:#5a5a5a"></div>
<div class="a" style="left:785px;top:422.6px;width:1px;height:2px;background:#5a5a5a"></div>
<div class="a" style="left:795px;top:422.6px;width:1px;height:2px;background:#5a5a5a"></div>
<div class="a" style="left:804px;top:422.6px;width:1px;height:2px;background:#5a5a5a"></div>
<div class="a" style="left:814px;top:422.6px;width:1px;height:2px;background:#5a5a5a"></div>
<div class="a" style="left:824px;top:422.6px;width:1px;height:2px;background:#5a5a5a"></div>
<div class="a" style="left:834px;top:422.6px;width:1px;height:2px;background:#5a5a5a"></div>
<div class="a" style="left:844px;top:422.6px;width:1px;height:2px;background:#5a5a5a"></div>
<svg style="left:829.5px;top:406.5px" width="10" height="10"><path d="M5 0.5L9 4.5V8Q9 9.5 7.5 9.5H2.5Q1 9.5 1 8V4.5Z" fill="#c4c4c4" stroke="#333" stroke-width="0.8"/></svg>
<svg style="left:768.2px;top:422.3px" width="10" height="10"><path d="M5 0.5L9 4.5V8Q9 9.5 7.5 9.5H2.5Q1 9.5 1 8V4.5Z" fill="#c4c4c4" stroke="#333" stroke-width="0.8"/></svg>
<div class="t" id="t69" style="transform:scaleX(0.8556);transform-origin:0 0;left:846px;top:407.00px;font-size:10.5px;color:#e8e8e8;font-weight:bold;">100</div>
<div class="t" id="t70" style="transform:scaleX(0.9544);transform-origin:0 0;left:864.6px;top:408.00px;font-size:10px;color:#8a8a8a;font-weight:normal;">%</div>
<div class="t" id="t71" style="transform:scaleX(0.8813);transform-origin:0 0;left:850.7px;top:423.00px;font-size:10.5px;color:#e8e8e8;font-weight:bold;">25</div>
<div class="t" id="t72" style="transform:scaleX(0.9544);transform-origin:0 0;left:864.6px;top:424.00px;font-size:10px;color:#8a8a8a;font-weight:normal;">%</div>
<div class="a" style="left:689px;top:441px;width:199px;height:1px;background:#444"></div>
<div class="a" style="left:735.4px;top:449.4px;width:8.5px;height:8.5px;background:#353535;border:1px solid #151515"></div>
<div class="t" id="t73" style="transform:scaleX(0.9830);transform-origin:0 0;left:751.6px;top:450.00px;font-size:10px;color:#a8a8a8;font-weight:normal;">Render behind image</div>
<div class="a" style="left:735.4px;top:465.6px;width:8.5px;height:8.5px;background:#353535;border:1px solid #151515"></div>
<div class="t" id="t74" style="transform:scaleX(0.9620);transform-origin:0 0;left:751.6px;top:466.00px;font-size:10px;color:#a8a8a8;font-weight:normal;">Render on every image</div>
<div class="a" style="left:688px;top:482.5px;width:201px;height:3px;background:#1e1e1e"></div>
<div class="a" style="left:688px;top:485px;width:201px;height:29px;background:#4a4a4a;border-top:1px solid #1e1e1e;border-right:1px solid #2e2e2e"></div>
<div class="a" style="left:688px;top:486px;width:200px;height:1px;background:#555"></div>
<div class="a" style="left:696px;top:494.4px;width:8.5px;height:8.5px;background:#353535;border:1px solid #151515"></div>
<div class="t" id="t75" style="transform:scaleX(1.0012);transform-origin:0 0;left:712.3px;top:494.00px;font-size:10px;color:#c8c8c8;font-weight:normal;">Watermarking :</div>
<div class="t" id="t76" style="transform:scaleX(0.9203);transform-origin:0 0;left:842px;top:494.00px;font-size:10px;color:#3a3a3a;font-weight:normal;">None</div>
<svg style="left:868px;top:495px" width="5" height="9"><path d="M0 3.5L2.5 0.5L5 3.5ZM0 5.5L2.5 8.5L5 5.5Z" fill="#3a3a3a"/></svg>
<div class="a" style="left:688px;top:513.5px;width:201px;height:83.5px;background:#4a4a4a;border-top:1px solid #1e1e1e;border-right:1px solid #2e2e2e"></div>
<div class="a" style="left:688px;top:514.5px;width:200px;height:1px;background:#555"></div>
<div class="a" style="left:696px;top:522px;width:8.5px;height:8.5px;background:#353535;border:1px solid #151515"></div>
<div class="t" id="t77" style="transform:scaleX(0.9569);transform-origin:0 0;left:712.3px;top:522.00px;font-size:10px;color:#c8c8c8;font-weight:normal;">Page Options</div>
<div class="a" style="left:689px;top:540.5px;width:199px;height:1px;background:#474747"></div>
<div class="a" style="left:735.4px;top:548.3px;width:8.5px;height:8.5px;background:#454545;border:1px solid #383838"></div>
<div class="t" id="t78" style="transform:scaleX(0.9595);transform-origin:0 0;left:751.6px;top:548.00px;font-size:10px;color:#393939;font-weight:normal;">Page Numbers</div>
<div class="a" style="left:735.4px;top:564.0999999999999px;width:8.5px;height:8.5px;background:#454545;border:1px solid #383838"></div>
<div class="t" id="t79" style="transform:scaleX(1.0044);transform-origin:0 0;left:751.6px;top:563.00px;font-size:10px;color:#393939;font-weight:normal;">Page Info</div>
<div class="a" style="left:735.4px;top:579.9px;width:8.5px;height:8.5px;background:#454545;border:1px solid #383838"></div>
<div class="t" id="t80" style="transform:scaleX(0.9480);transform-origin:0 0;left:751.6px;top:579.00px;font-size:10px;color:#393939;font-weight:normal;">Crop Marks</div>
<div class="a" style="left:688px;top:597px;width:201px;height:31px;background:#4a4a4a;border-top:1px solid #1e1e1e;border-right:1px solid #2e2e2e"></div>
<div class="a" style="left:688px;top:598px;width:200px;height:1px;background:#555"></div>
<div class="a" style="left:696px;top:609px;width:8.5px;height:8.5px;background:#353535;border:1px solid #151515"></div>
<div class="t" id="t81" style="transform:scaleX(1.0308);transform-origin:0 0;left:712.3px;top:609.00px;font-size:10px;color:#c0c0c0;font-weight:normal;">Photo Info</div>
<div class="t" id="t82" style="transform:scaleX(0.9601);transform-origin:0 0;left:825.5px;top:609.00px;font-size:10px;color:#3a3a3a;font-weight:normal;">Filename</div>
<svg style="left:868px;top:609px" width="5" height="9"><path d="M0 3.5L2.5 0.5L5 3.5ZM0 5.5L2.5 8.5L5 5.5Z" fill="#3a3a3a"/></svg>
<div class="a" style="left:688px;top:628px;width:201px;height:29px;background:#4a4a4a;border-top:1px solid #1e1e1e;border-right:1px solid #2e2e2e"></div>
<div class="a" style="left:688px;top:629px;width:200px;height:1px;background:#555"></div>
<div class="t" id="t83" style="transform:scaleX(0.9203);transform-origin:0 0;left:713.6px;top:639.00px;font-size:10px;color:#c0c0c0;font-weight:normal;">Font Size :</div>
<div class="t" id="t84" style="transform:scaleX(0.8556);transform-origin:0 0;left:855.8px;top:638.00px;font-size:10.5px;color:#e0e0e0;font-weight:bold;">10</div>
<svg style="left:868px;top:639px" width="5" height="9"><path d="M0 3.5L2.5 0.5L5 3.5ZM0 5.5L2.5 8.5L5 5.5Z" fill="#c8c8c8"/></svg>
<div class="a" style="left:686px;top:657px;width:217px;height:36px;background:#2a2a2a"></div>
<div class="a" style="left:893px;top:657px;width:10px;height:36px;background:#000"></div>
<div class="a" style="left:894px;top:658px;width:8px;height:34px;background:#181818"></div>
<div class="a" style="left:896px;top:659px;width:1px;height:32px;background:#232323"></div>
<div class="a" style="left:899px;top:659px;width:1px;height:32px;background:#232323"></div>
<div class="a" style="left:688.6px;top:666px;width:94px;height:20.5px;background:linear-gradient(#666,#4a4a4a 45%,#3e3e3e);border:1px solid #1a1a1a"></div>
<div class="t" id="t85" style="transform:scaleX(0.9202);transform-origin:0 0;left:723.8px;top:669.00px;font-size:14px;color:#a9a9a9;font-weight:normal;">Print</div>
<div class="a" style="left:791px;top:666px;width:97.5px;height:20.5px;background:linear-gradient(#666,#4a4a4a 45%,#3e3e3e);border:1px solid #1a1a1a"></div>
<div class="t" id="t86" style="transform:scaleX(0.8535);transform-origin:0 0;left:817.5px;top:669.00px;font-size:14px;color:#a9a9a9;font-weight:normal;">Printer...</div>
<svg style="left:905px;top:407.5px" width="7" height="12"><path d="M1 0L7 6L1 12Z" fill="#4a4a4a"/></svg>
<div class="a" style="left:45px;top:701.5px;width:22.5px;height:14.5px;border:1.5px solid #d0d0d0;border-top-width:2.5px"></div>
<div class="t" id="t87" style="left:53.5px;top:705.00px;font-size:10px;color:#e0e0e0;font-weight:normal;">1</div>
<div class="a" style="left:76.3px;top:701.5px;width:22.5px;height:14.5px;border:1.5px solid #8a8a8a;border-top-width:2.5px"></div>
<div class="t" id="t88" style="left:84px;top:705.00px;font-size:10px;color:#8a8a8a;font-weight:normal;">2</div>
<div class="a" style="left:107px;top:701px;width:1px;height:1px;background:#4a4a4a"></div>
<div class="a" style="left:179px;top:701px;width:1px;height:1px;background:#4a4a4a"></div>
<div class="a" style="left:107px;top:703px;width:1px;height:1px;background:#4a4a4a"></div>
<div class="a" style="left:179px;top:703px;width:1px;height:1px;background:#4a4a4a"></div>
<div class="a" style="left:107px;top:705px;width:1px;height:1px;background:#4a4a4a"></div>
<div class="a" style="left:179px;top:705px;width:1px;height:1px;background:#4a4a4a"></div>
<div class="a" style="left:107px;top:707px;width:1px;height:1px;background:#4a4a4a"></div>
<div class="a" style="left:179px;top:707px;width:1px;height:1px;background:#4a4a4a"></div>
<div class="a" style="left:107px;top:709px;width:1px;height:1px;background:#4a4a4a"></div>
<div class="a" style="left:179px;top:709px;width:1px;height:1px;background:#4a4a4a"></div>
<div class="a" style="left:107px;top:711px;width:1px;height:1px;background:#4a4a4a"></div>
<div class="a" style="left:179px;top:711px;width:1px;height:1px;background:#4a4a4a"></div>
<div class="a" style="left:107px;top:713px;width:1px;height:1px;background:#4a4a4a"></div>
<div class="a" style="left:179px;top:713px;width:1px;height:1px;background:#4a4a4a"></div>
<div class="a" style="left:107px;top:715px;width:1px;height:1px;background:#4a4a4a"></div>
<div class="a" style="left:179px;top:715px;width:1px;height:1px;background:#4a4a4a"></div>
<svg style="left:116px;top:702px" width="14" height="13"><rect x="0" y="0" width="6" height="5.5" fill="#5e5e5e"/><rect x="7.5" y="0" width="6" height="5.5" fill="#5e5e5e"/><rect x="0" y="7" width="6" height="5.5" fill="#5e5e5e"/><rect x="7.5" y="7" width="6" height="5.5" fill="#5e5e5e"/></svg>
<svg style="left:137.5px;top:702.5px" width="12" height="12"><path d="M0 6L6 0.5V3.5H12V8.5H6V11.5Z" fill="#5e5e5e"/></svg>
<svg style="left:158.7px;top:702.5px" width="12" height="12"><path d="M12 6L6 0.5V3.5H0V8.5H6V11.5Z" fill="#5e5e5e"/></svg>
<div class="t" id="t89" style="transform:scaleX(0.9496);transform-origin:0 0;left:189px;top:704.00px;font-size:10.8px;color:#9a9a9a;font-weight:normal;">Previous Import</div>
<div class="t" id="t90" style="transform:scaleX(1.0230);transform-origin:0 0;left:280.8px;top:704.00px;font-size:10.8px;color:#9a9a9a;font-weight:normal;">1 photo /</div>
<div class="t" id="t91" style="transform:scaleX(0.9326);transform-origin:0 0;left:324px;top:704.00px;font-size:10.8px;color:#f0f0f0;font-weight:bold;">1 selected</div>
<div class="t" id="t92" style="transform:scaleX(0.9903);transform-origin:0 0;left:377px;top:704.00px;font-size:10.8px;color:#a8a8a8;font-weight:normal;">/Nikolay-Hristov-photo-1562292817-58d294c3a7e3-full.jpg</div>
<svg style="left:660.6px;top:706.5px" width="6" height="4"><path d="M0 0H6L3 3.5Z" fill="#aaa"/></svg>
<div class="t" id="t93" style="transform:scaleX(0.9500);transform-origin:0 0;left:741px;top:703.00px;font-size:10.8px;color:#9a9a9a;font-weight:normal;">Filter :</div>
<div class="a" style="left:781px;top:702.6px;width:105.7px;height:13.1px;background:linear-gradient(#353535,#262626);border:1px solid #3c3c3c"></div>
<div class="t" id="t94" style="transform:scaleX(0.9443);transform-origin:0 0;left:786.3px;top:704.00px;font-size:10.8px;color:#9a9a9a;font-weight:normal;">Filters Off</div>
<div class="a" style="left:875.8px;top:704px;width:8.2px;height:10px;background:#3a3a3a;border:1px solid #666"></div>
<svg style="left:877px;top:705px" width="6" height="8"><path d="M0 3L3 0.5L6 3ZM0 5L3 7.5L6 5Z" fill="#bbb"/></svg>
<div class="a" style="left:895.8px;top:701.6px;width:9px;height:13.2px;background:#222;border:1px solid #3a3a3a"></div>
<div class="a" style="left:897px;top:708px;width:6.5px;height:5.5px;background:#c8c8c8"></div>
<div class="a" style="left:897.5px;top:703.5px;width:5.5px;height:3px;background:#555"></div>
<div class="a" style="left:45.5px;top:722px;width:859.5px;height:73px;border:1px solid #2a2a2a;background:#000;border-radius:2px"></div>
<div class="a" style="left:48px;top:724px;width:854px;height:59.3px;background:#232323"></div>
<div class="a" style="left:48px;top:724px;width:59px;height:59.3px;background:#c8c8c8;border-bottom:1px solid #eee"></div>
<div class="a" style="left:60.8px;top:727.6px;width:33.8px;height:49.3px;background:#f2f2f2"></div>
<div class="a" style="left:62px;top:729px;width:31px;height:46px;border:0.5px solid #000"><svg viewBox="0 0 53 80" width="31" height="46" preserveAspectRatio="none" style="position:static;display:block">
<rect width="53" height="80" fill="#141b26"/>
<path d="M0 0H53V8H0Z" fill="#121820"/>
<path d="M0 10L12 6L16 30L8 44L0 40Z" fill="#172a44"/>
<path d="M4 14L10 12L12 28L5 34Z" fill="#1d3658"/>
<path d="M12 0H28V44H14Z" fill="#111824"/>
<path d="M27 0H45L46 48H30Z" fill="#1a3460"/>
<path d="M31 4H40L41 46H33Z" fill="#20467e"/>
<path d="M35 10H38L39 44H36Z" fill="#2a5696"/>
<path d="M44 0H53V56H45Z" fill="#2a2521"/>
<path d="M29 48H53V57H29Z" fill="#111111"/>
<path d="M0 56H53V80H0Z" fill="#5a4630"/>
<path d="M8 56Q28 53 53 56V66Q34 62 8 67Z" fill="#a08a5c"/>
<path d="M20 62Q36 60 53 63V70H20Z" fill="#4a3826"/>
<path d="M0 42L11 58L9 62L0 62Z" fill="#e6d6b4"/>
<path d="M0 60H8L10 80H0Z" fill="#c8b898"/>
<path d="M6 72Q14 66 24 70L23 80H6Z" fill="#111010"/>
<path d="M24 72Q36 68 48 72L47 80H23Z" fill="#9a8a58"/>
<path d="M32 73Q38 71 43 74L41 78H33Z" fill="#6c7a2a"/>
<path d="M43 70Q49 68 53 70V76H44Z" fill="#7c8290"/>
<path d="M20 14Q24 12 27.5 15L28 24H19.5Z" fill="#5a3a26"/>
<ellipse cx="23.6" cy="18" rx="2.4" ry="3.2" fill="#d6a88a"/>
<path d="M17.5 23.5H28L28.5 27.5H17Z" fill="#e4dcd6"/>
<path d="M17.5 26L12 38L13.5 39L18.5 30Z" fill="#e8c0a0"/>
<path d="M17.5 27H28.5Q30 40 31 56Q27 63 21 63Q13 63 10 57Q10 46 12.5 40Q15 32 17.5 27Z" fill="#f26810"/>
<path d="M21 30Q24 44 24 62Q19 63 15 59Q18 44 21 30Z" fill="#e0520a"/>
<path d="M14 44Q17 50 15 58L12 57Z" fill="#dd4a08"/>
<path d="M22.5 62L23 70H25L25.5 62ZM26 62L27 69H28.5L28 62Z" fill="#dcc0a8"/>
</svg></div>
<svg style="left:468.7px;top:800.8px" width="11" height="6"><path d="M0 0H11L5.5 6Z" fill="#555"/></svg>
<div class="a" style="left:783px;top:658.5px;width:116px;height:35.5px;border:5px solid #ee0000;border-radius:12px"></div>
</body></html>
